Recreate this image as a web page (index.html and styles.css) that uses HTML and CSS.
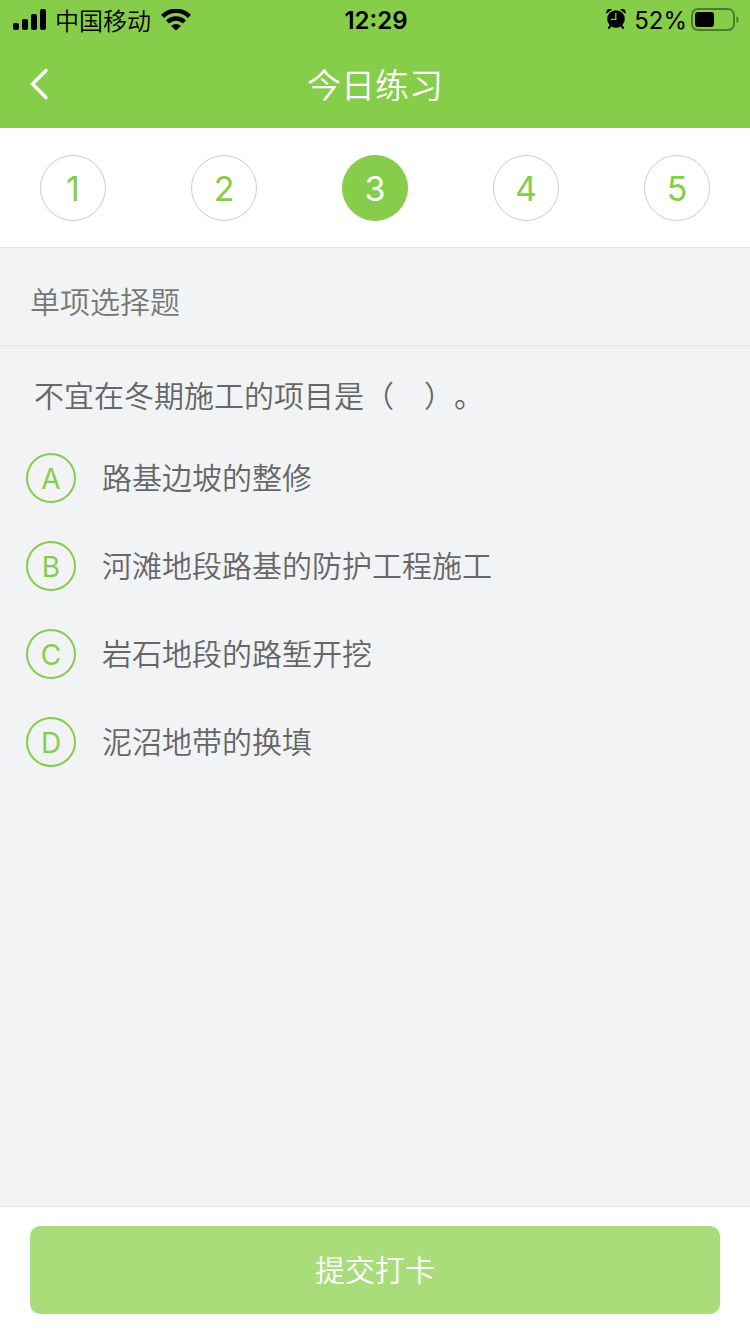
FILE: index.html
```html
<!DOCTYPE html>
<html lang="zh-CN">
<head>
    <title>今日练习</title>
    <meta charset="utf-8">
    <meta name="viewport" content="width=device-width, initial-scale=1.0">
    <link rel="stylesheet" href="styles.css">
</head>
<body>
    <div class="status-bar">
        <div class="status-left">
            <svg class="icon-signal" viewBox="0 0 34 22" width="34" height="22">
                <rect x="0" y="14" width="6" height="7" rx="2"/>
                <rect x="9" y="10" width="6" height="11" rx="2"/>
                <rect x="18" y="5" width="6" height="16" rx="2"/>
                <rect x="27" y="0" width="6" height="21" rx="2"/>
            </svg>
            <span class="carrier">中国移动</span>
            <svg class="icon-wifi" viewBox="0 0 30 22" width="30" height="22">
                <g fill="none" stroke="#000" stroke-width="4.4">
                    <path d="M1.6 7.4 A19 19 0 0 1 28.4 7.4"/>
                    <path d="M6.6 13 A12 12 0 0 1 23.4 13"/>
                </g>
                <path d="M15 21.4 L10 16.8 Q15 13 20 16.8 Z"/>
            </svg>
        </div>
        <span class="status-time">12:29</span>
        <div class="status-right">
            <svg class="icon-alarm" viewBox="0 0 20 22" width="20" height="22">
                <circle cx="10" cy="10" r="8.8"/>
                <path d="M0.6 4.8 A3.6 3.6 0 0 1 6 0.4 Z M19.4 4.8 A3.6 3.6 0 0 0 14 0.4 Z"/>
                <path d="M5 16 L2.4 19.6 M15 16 L17.6 19.6" stroke="#000" stroke-width="2"/>
                <path d="M9.8 4 V10.4 H4.8" fill="none" stroke="#86cd4a" stroke-width="1.3"/>
            </svg>
            <span class="battery-level">52%</span>
            <svg class="icon-battery" viewBox="0 0 48 24" width="48" height="24">
                <rect x="1" y="1" width="42" height="21" rx="6" fill="none" stroke="#000" stroke-opacity=".4" stroke-width="2"/>
                <rect x="4" y="4" width="19" height="15" rx="3"/>
                <path d="M45.4 8 Q47.6 9 47.6 11.5 Q47.6 14 45.4 15 Z" fill-opacity=".4"/>
            </svg>
        </div>
    </div>

    <header class="nav-bar">
        <button class="back" type="button" aria-label="返回">
            <svg viewBox="0 0 20 32" width="20" height="32">
                <path d="M17 2.5 L3.5 16 L17 29.5" fill="none" stroke="#fff" stroke-width="3.4" stroke-linecap="round"/>
            </svg>
        </button>
        <h1 class="title">今日练习</h1>
    </header>

    <nav class="steps">
        <button class="step" type="button">1</button>
        <button class="step" type="button">2</button>
        <button class="step active" type="button" aria-current="step">3</button>
        <button class="step" type="button">4</button>
        <button class="step" type="button">5</button>
    </nav>

    <main class="content">
        <h2 class="section-title">单项选择题</h2>
        <fieldset class="question">
            <legend class="question-text">不宜在冬期施工的项目是（　）。</legend>
            <label class="option">
                <input class="option-input" type="radio" name="answer" value="A">
                <span class="option-key">A</span>
                <span class="option-text">路基边坡的整修</span>
            </label>
            <label class="option">
                <input class="option-input" type="radio" name="answer" value="B">
                <span class="option-key">B</span>
                <span class="option-text">河滩地段路基的防护工程施工</span>
            </label>
            <label class="option">
                <input class="option-input" type="radio" name="answer" value="C">
                <span class="option-key">C</span>
                <span class="option-text">岩石地段的路堑开挖</span>
            </label>
            <label class="option">
                <input class="option-input" type="radio" name="answer" value="D">
                <span class="option-key">D</span>
                <span class="option-text">泥沼地带的换填</span>
            </label>
        </fieldset>
    </main>

    <footer class="footer">
        <button class="submit" type="button">提交打卡</button>
    </footer>
</body>
</html>
```

FILE: styles.css
```css
:root {
    --green: #86cd4a;
    --green-light: #a9dd7a;
    --bg-color: #f2f3f5;
    --line-color: #e5e6e8;
    --text-color: #666;
}

* {
    box-sizing: border-box;
}

body {
    display: flex;
    flex-direction: column;
    min-height: 100vh;
    margin: 0;
    background: var(--bg-color);
    color: var(--text-color);
    font-family: "Noto Sans CJK SC", sans-serif;
    font-size: 30px;
    font-weight: 350;
    text-spacing-trim: space-all;
}

button {
    padding: 0;
    border: 0;
    font: inherit;
    cursor: pointer;
}

svg {
    display: block;
}

/* status bar */
.status-bar {
    display: grid;
    grid-template-columns: 1fr auto 1fr;
    align-items: center;
    height: 40px;
    padding: 0 11px 0 13px;
    background: var(--green);
    color: #000;
    font-size: 24px;
    line-height: 38px;
}

.status-left,
.status-right {
    display: flex;
    align-items: center;
}

.status-left {
    gap: 8px;
}

.icon-wifi {
    margin-left: 2px;
}

.status-time,
.battery-level {
    padding-top: 2px;
    font-family: Inter, sans-serif;
    font-weight: 400;
}

.status-time {
    font-weight: 600;
}

.status-right {
    justify-content: flex-end;
    gap: 4px;
}

.icon-alarm {
    margin-right: 4px;
}

/* title */
.nav-bar {
    display: grid;
    grid-template-columns: 80px 1fr 80px;
    align-items: center;
    height: 88px;
    background: var(--green);
    color: #fff;
}

.back {
    display: flex;
    align-items: center;
    height: 88px;
    padding-left: 29px;
    background: none;
}

.title {
    margin: 0;
    font-size: 34px;
    font-weight: 350;
    line-height: 88px;
    text-align: center;
}

/* question numbers */
.steps {
    display: flex;
    justify-content: space-between;
    padding: 27px 40px 26px;
    border-bottom: 1px solid var(--line-color);
    background: #fff;
}

.step {
    width: 66px;
    height: 66px;
    border: 1px solid #ccc;
    border-radius: 50%;
    background: #fff;
    color: var(--green);
    font-family: Inter, sans-serif;
    font-size: 34px;
    font-weight: 400;
}

.step.active {
    border-color: var(--green);
    background: var(--green);
    color: #fff;
}

/* question */
.content {
    flex: 1;
}

.section-title {
    margin: 0;
    padding: 32px 30px 25px;
    border-bottom: 1px solid var(--line-color);
    color: #777;
    font-size: 30px;
    font-weight: 350;
    line-height: 40px;
}

.question {
    min-width: 0;
    margin: 0;
    padding: 0 26px;
    border: 0;
}

.question-text {
    padding: 28px 8px 39px;
    line-height: 40px;
}

.option {
    display: flex;
    align-items: center;
    gap: 26px;
    position: relative;
    margin-bottom: 38px;
    cursor: pointer;
}

.option-input {
    position: absolute;
    width: 50px;
    height: 50px;
    margin: 0;
    opacity: 0;
}

.option-key {
    flex: none;
    width: 50px;
    height: 50px;
    border: 2px solid var(--green);
    border-radius: 50%;
    color: var(--green);
    font-family: Inter, sans-serif;
    font-size: 28px;
    font-weight: 400;
    line-height: 48px;
    text-align: center;
}

.option-input:checked + .option-key {
    background: var(--green);
    color: #fff;
}

.option-text {
    padding-bottom: 4px;
    line-height: 40px;
}

/* submit */
.footer {
    padding: 19px 30px 20px;
    border-top: 1px solid var(--line-color);
    background: #fff;
}

.submit {
    width: 100%;
    height: 88px;
    padding-bottom: 4px;
    border-radius: 10px;
    background: var(--green-light);
    color: #fff;
}
```
